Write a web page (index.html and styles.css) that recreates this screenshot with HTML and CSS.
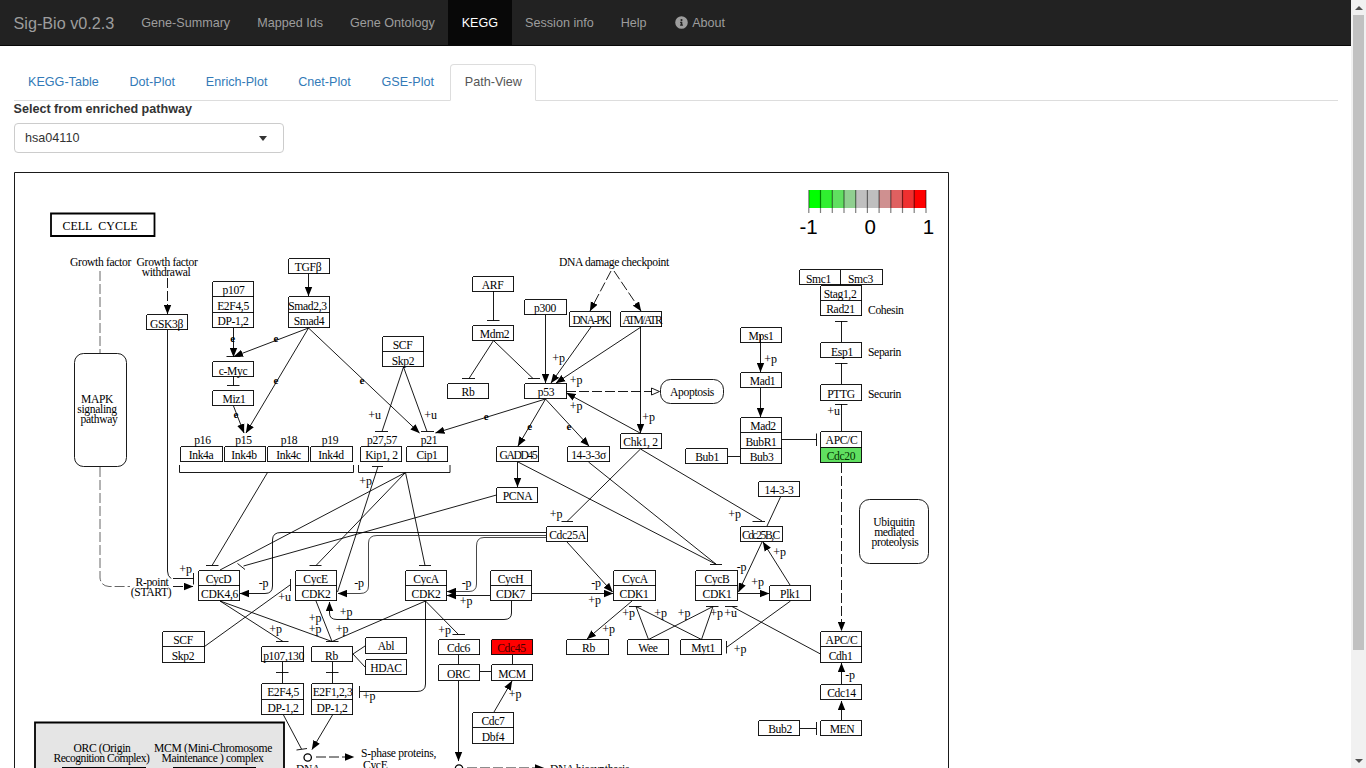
FILE: index.html
```html
<!DOCTYPE html>
<html lang="en">
<head>
<meta charset="utf-8">
<title>Sig-Bio v0.2.3</title>
<link rel="stylesheet" href="styles.css">
</head>
<body>
<div class="shell">
<div class="page">
<nav class="navbar">
  <a class="brand">Sig-Bio v0.2.3</a>
  <a class="nav-item">Gene-Summary</a>
  <a class="nav-item">Mapped Ids</a>
  <a class="nav-item">Gene Ontology</a>
  <a class="nav-item active">KEGG</a>
  <a class="nav-item">Session info</a>
  <a class="nav-item">Help</a>
  <a class="nav-item about"><svg class="info" viewBox="0 0 512 512"><path d="M256 8a248 248 0 1 0 0 496 248 248 0 0 0 0-496zm0 110a42 42 0 1 1 0 84 42 42 0 0 1 0-84zm56 254c0 7-5 12-12 12h-88c-7 0-12-5-12-12v-24c0-7 5-12 12-12h12v-64h-12c-7 0-12-5-12-12v-24c0-7 5-12 12-12h64c7 0 12 5 12 12v100h12c7 0 12 5 12 12z"/></svg>About</a>
</nav>
<main class="content">
  <div class="tabs">
    <a class="tab">KEGG-Table</a><a class="tab">Dot-Plot</a><a class="tab">Enrich-Plot</a><a class="tab">Cnet-Plot</a><a class="tab">GSE-Plot</a><a class="tab active">Path-View</a>
  </div>
  <label class="field-label">Select from enriched pathway</label>
  <div class="select"><span>hsa04110</span><i class="caret"></i></div>
  <svg class="pathway" viewBox="14 172 935 620" width="935" height="620">
    <defs>
      <marker id="arrow" markerUnits="userSpaceOnUse" markerWidth="10" markerHeight="8" refX="9" refY="4" orient="auto"><path d="M0 .3 9.3 4 0 7.7z"/></marker>
    </defs>
    <path class="line" d="M14.5 172.5H948.5V1200H14.5z"/>

    <!-- colour key -->
    <g class="crisp">
      <path fill="#00ff00" d="M809 190h12v18h-12z"/><path fill="#30ef30" d="M821 190h11v18h-11z"/><path fill="#60df60" d="M832 190h12v18h-12z"/><path fill="#90cf90" d="M844 190h12v18h-12z"/><path fill="#bfbfbf" d="M856 190h23v18h-23z"/><path fill="#cf9090" d="M879 190h12v18h-12z"/><path fill="#df6060" d="M891 190h11v18h-11z"/><path fill="#ef3030" d="M902 190h12v18h-12z"/><path fill="#ff0000" d="M914 190h12v18h-12z"/>
    </g>
    <path class="ticks" d="M808.8 190v23M820.5 190v23M832.3 190v23M844 190v23M855.7 190v23M867.4 190v23M879.1 190v23M890.8 190v23M902.5 190v23M914.2 190v23M926 190v23"/>
    <g class="key"><text x="808.5" y="234">-1</text><text x="870.3" y="234">0</text><text x="928.5" y="234">1</text></g>

    <!-- complexes panel -->
    <path class="panel" d="M35 800V722.5H284V800"/>
    <path class="thick" d="M62 768H146M173 768H256"/>
    <path class="thick" d="M51 213.5H154.500V236H51z"/>

    <!-- coloured genes -->
    <path fill="#60df60" d="M820.5 447.500h41v15h-41z"/>
    <path fill="#ff0000" d="M491.5 639.5h41v15h-41z"/>

    <!-- gene boxes -->
    <path class="line crisp" d="M288.500 258.500h41v15h-41zM212.500 281.500h41v46h-41zM212.500 296.500h41M212.500 312.500h41M288.500 296.500h41v31h-41zM288.500 312.500h41M146.500 314.500h41v15h-41zM212.500 361.500h41v15h-41zM212.500 390.500h41v15h-41z
      M180.500 446.500h42v15h-42zM224.500 446.500h41v15h-41zM267.500 446.500h41v15h-41zM310.500 446.500h42v15h-42zM360.500 446.500h41v15h-41zM406.500 446.500h41v15h-41z
      M382.500 336.500h41v30h-41zM382.500 351.500h41M472.500 276.500h41v15h-41zM472.500 325.500h41v15h-41zM524.500 299.500h42v15h-42zM569.500 311.500h41v15h-41zM620.500 311.500h41v15h-41zM447.500 383.500h41v15h-41zM524.500 383.500h42v15h-42zM496.500 446.500h42v15h-42zM567.500 446.500h42v15h-42zM620.500 433.500h41v15h-41z
      M740.500 327.500h41v15h-41zM740.500 372.500h41v15h-41zM740.500 417.500h41v46h-41zM740.500 432.500h41M740.500 448.500h41M685.500 448.500h42v15h-42z
      M799.500 269.500h83v15h-83zM840.500 269.500v15M820.500 285.500h41v30h-41zM820.500 300.500h41M820.500 342.500h41v15h-41zM820.500 384.500h41v16h-41zM820.500 431.500h41v31h-41zM820.500 447.500h41
      M758.500 481.500h41v15h-41zM740.500 526.500h42v15h-42zM613.500 570.500h42v30h-42zM613.500 585.500h42M695.500 570.500h42v30h-42zM695.500 585.500h42M769.500 585.500h41v15h-41zM627.500 639.500h41v15h-41zM680.500 639.500h41v15h-41zM566.500 639.500h42v15h-42z
      M405.500 570.500h41v30h-41zM405.500 585.500h41M490.500 570.500h41v30h-41zM490.500 585.500h41M496.500 487.500h41v15h-41zM546.500 526.500h41v15h-41zM365.500 637.500h41v16h-41zM365.500 659.500h41v15h-41zM438.500 639.500h41v15h-41zM491.500 639.500h41v15h-41zM438.500 664.500h41v16h-41zM491.500 664.500h41v16h-41zM472.500 712.500h41v31h-41zM472.500 727.500h41
      M198.500 570.500h41v30h-41zM198.500 585.500h41M295.500 570.500h41v30h-41zM295.500 585.500h41M162.500 631.500h42v31h-42zM162.500 646.500h42M261.500 646.500h42v15h-42zM311.500 646.500h41v15h-41zM261.500 683.500h42v31h-42zM261.500 699.500h42M311.500 683.500h41v31h-41zM311.500 699.500h41
      M820.500 631.500h41v31h-41zM820.500 646.500h41M820.500 684.500h41v15h-41zM820.500 720.500h41v15h-41zM758.500 720.500h41v15h-41z"/>
    <g class="line"><rect x="74.500" y="353.500" width="52" height="113" rx="9"/><rect x="660.500" y="379.500" width="63" height="24" rx="10"/><rect x="859.500" y="499.500" width="69" height="64" rx="10"/></g>

    <!-- plain and inhibition edges -->
    <path class="line" d="M179.500 465V472.500H353.500V465M358.500 465V472.500H450V465
      M233.500 376V385.500M227 385.500H239.500M226.500 356.500H240.500
      M403.500 367 382 431.500M375 431.500H388M403.500 367 427 431.500M421 431.500H434
      M493.500 291V320.500M487 320.500H499.500M493.500 340.500 469 378.500M462 378.500H475M493.500 340.500 533 378.500M528 378.500H540
      M640.500 449 567 521.500M561.500 521.500H573M640.500 449 762 521M752.500 521.500H765M588.500 462 716.500 564.500M518 462 716.500 564.500M710 564.500H722
      M496.500 495 243.500 566M237.500 563.500 245 569.500M267.500 472.500 212 565.500M206 565.500H218.500M405.500 472.500 220 570M405.500 472.500 316 565.500M309.500 565.500H321.500M405.500 472.500 425 565.500M419 565.500H431M337.500 592 378 466.500M372 466.500H383
      M167.500 330V571Q167.500 576 171 578.500M173 578.500H193.500M193.500 573V584.500
      M220 601 283 641.500M276 641.500H288.500M220 601 332 641.500M326 641.500H338.500M316 601 332 641.500M425.500 601 332 641.500M425.500 601 458.500 634.500M452.500 634.500H465M425.500 601V684Q425.500 691.500 417 691.500H359.500M359.500 686V698
      M282.500 662V683M276 672.500H288.500M332.500 662V683M326 672.500H338.500M353 654 365 646M353 654 365 667M204.500 646.500 290 585M290.500 579V591M283.500 715 301.500 749M296.500 750 307 748.500
      M458.500 655V664M512.500 655V664M480 671.500H491
      M648.500 639.500 636 606.500M648.500 639.500 713 606.500M701.500 639.500 636 606.500M701.500 639.500 713 606.500M629 606.500H641.500M706 606.500H718.500M725 606.500H737.500M820.500 654 732 606.500M790.500 601 727 647M726.500 641V653.500M780.500 497 767 526
      M728 456.500H740M782 439.500H816.500M816.500 433.500V446M841.500 321V342M835 321.500H847.500M841.500 363V384M835 363.500H847.500M841.500 404V431M835 404.500H847.500M800 728.500H816.500M816.500 722V735"/>

    <!-- dashed edges -->
    <g class="line dash">
      <path class="soft" d="M100 271V353M100 467V578Q101 586 109 586.500H130"/>
      <path d="M566 391.500H652"/>
      <g marker-end="url(#arrow)"><path d="M167.500 278V314"/><path d="M173 586.500H193"/><path d="M611 271 590 311"/><path d="M614 271 641 311"/><path d="M841.500 463V631"/><path d="M316 757H354"/><path d="M467 768H544"/></g>
    </g>
    <path class="line" d="M651.500 388 659.500 391.500 651.500 395z"/>

    <!-- activation edges -->
    <g class="line arrows">
      <path d="M308.500 274V296"/><path d="M233.500 328V357"/><path d="M308.500 328 234 356.500"/><path d="M308.500 328 246 433"/><path d="M308.500 328 419.500 433"/><path d="M233.500 406 244 433"/>
      <path d="M545.500 315V383"/><path d="M591 327 551 383"/><path d="M641 327 556 383"/><path d="M640.500 327V433"/><path d="M640 433 566.500 393"/>
      <path d="M545.500 399 435.500 433"/><path d="M545.500 399 518 446"/><path d="M545.500 399 589 446"/><path d="M517.500 462V487"/>
      <path d="M546 532.500H281Q272.500 532.500 272.500 540V586Q272.500 593.500 265 593.500H240"/><path class="mid" d="M546 535.500H377Q368.500 535.500 368.500 543V586Q368.500 593.500 360 593.500H338"/><path class="mid" d="M546 537.500H484Q476.500 537.500 476.500 546V584Q476.500 591.500 469 591.500H447"/>
      <path d="M490 595.500H447"/><path d="M532 593.500H613"/><path d="M511.500 601V613Q511.500 619.500 504 619.500H337Q329.500 619.500 329.500 613V602"/><path d="M567 542 612.500 592"/>
      <path d="M332.500 715 312 749.500"/><path d="M458.500 681V761"/><path d="M494 712 512 681"/><path d="M632 601 587 639"/><path d="M790 585 763 542"/><path d="M762 542 738.500 592"/><path d="M738 593.500H769"/>
      <path d="M760.500 335V372"/><path d="M760.500 388V417"/><path d="M841.500 684V663"/><path d="M841.500 720V701"/>
    </g>
    <g class="ring"><circle cx="307.700" cy="757.500" r="3.700"/><circle cx="459" cy="768.500" r="3.700"/></g>

    <!-- labels -->
    <g class="label">
      <text x="62.500" y="230" class="left title" textLength="75" lengthAdjust="spacingAndGlyphs">CELL&#160; CYCLE</text>
      <text x="100.500" y="266">Growth factor</text><text x="167" y="266">Growth factor</text><text x="166" y="276">withdrawal</text>
      <text x="308" y="271">TGFβ</text><text x="233.500" y="294">p107</text><text x="233" y="310">E2F4,5</text><text x="233" y="325">DP-1,2</text><text x="307.500" y="310">Smad2,3</text><text x="309" y="325">Smad4</text><text x="166.500" y="328">GSK3β</text><text x="233" y="375">c-Myc</text><text x="234" y="403">Miz1</text>
      <text x="97" y="403">MAPK</text><text x="97" y="413">signaling</text><text x="99" y="423">pathway</text>
      <text x="202.500" y="444">p16</text><text x="243.500" y="444">p15</text><text x="289" y="444">p18</text><text x="330" y="444">p19</text><text x="382" y="444">p27,57</text><text x="429" y="444">p21</text>
      <text x="201" y="459">Ink4a</text><text x="244" y="459">Ink4b</text><text x="288.500" y="459">Ink4c</text><text x="331" y="459">Ink4d</text><text x="381.500" y="459">Kip1, 2</text><text x="427" y="459">Cip1</text>
      <text x="402.500" y="349">SCF</text><text x="403" y="365">Skp2</text><text x="492.500" y="289">ARF</text><text x="494.500" y="338">Mdm2</text><text x="545" y="312">p300</text><text x="591" y="324" textLength="37">DNA-PK</text><text x="642.500" y="324" textLength="40">ATM/ATR</text><text x="468" y="396">Rb</text><text x="546" y="396">p53</text><text x="614" y="266">DNA damage checkpoint</text>
      <text x="518.500" y="459" textLength="38">GADD45</text><text x="588.500" y="459">14-3-3σ</text><text x="640.500" y="446">Chk1, 2</text><text x="692" y="396">Apoptosis</text><text x="761" y="340">Mps1</text><text x="762.500" y="385">Mad1</text><text x="763" y="430">Mad2</text><text x="761" y="446">BubR1</text><text x="761.500" y="461">Bub3</text><text x="707" y="461">Bub1</text>
      <text x="818.500" y="283">Smc1</text><text x="860.500" y="283">Smc3</text><text x="840" y="298">Stag1,2</text><text x="840.500" y="313">Rad21</text><text x="842" y="356">Esp1</text><text x="841" y="398">PTTG</text><text x="841.500" y="444">APC/C</text><text x="841" y="460" fill="#030">Cdc20</text>
      <text x="868" y="314" class="left">Cohesin</text><text x="868" y="356" class="left">Separin</text><text x="868" y="398" class="left">Securin</text>
      <text x="779" y="494">14-3-3</text><text x="761" y="539" textLength="38">Cdc25B,C</text><text x="894" y="526">Ubiquitin</text><text x="894" y="536">mediated</text><text x="895" y="546">proteolysis</text>
      <text x="218.500" y="583">CycD</text><text x="219.500" y="598">CDK4,6</text><text x="315.500" y="583">CycE</text><text x="316" y="598">CDK2</text><text x="426" y="583">CycA</text><text x="426" y="598">CDK2</text><text x="510.500" y="583">CycH</text><text x="510.500" y="598">CDK7</text><text x="517.500" y="500">PCNA</text><text x="567.500" y="539">Cdc25A</text><text x="635" y="583">CycA</text><text x="634" y="598">CDK1</text><text x="717" y="583">CycB</text><text x="717" y="598">CDK1</text><text x="790" y="598">Plk1</text>
      <text x="152" y="586">R-point</text><text x="151" y="596">(START)</text><text x="183" y="644">SCF</text><text x="183" y="660">Skp2</text><text x="283.500" y="660">p107,130</text><text x="331.500" y="660">Rb</text><text x="283" y="696">E2F4,5</text><text x="283" y="712">DP-1,2</text><text x="332.500" y="696">E2F1,2,3</text><text x="332" y="712">DP-1,2</text><text x="386" y="650">Abl</text><text x="386" y="672">HDAC</text>
      <text x="458.500" y="652">Cdc6</text><text x="511.500" y="652" fill="#400">Cdc45</text><text x="458.500" y="678">ORC</text><text x="512" y="678">MCM</text><text x="493" y="725">Cdc7</text><text x="493" y="741">Dbf4</text><text x="588.500" y="652">Rb</text><text x="648" y="652">Wee</text><text x="703" y="652">Myt1</text><text x="841.500" y="644">APC/C</text><text x="840.500" y="660">Cdh1</text><text x="841.500" y="697">Cdc14</text><text x="842" y="733">MEN</text><text x="780" y="733">Bub2</text>
      <text x="102" y="752">ORC (Origin</text><text x="101.500" y="762" textLength="96">Recognition Complex)</text><text x="213" y="752" textLength="118">MCM (Mini-Chromosome</text><text x="212.500" y="762">Maintenance ) complex</text>
      <text x="361" y="757" class="left" textLength="75">S-phase proteins,</text><text x="363" y="769" class="left">CycE</text><text x="296" y="773" class="left">DNA</text><text x="550" y="773" class="left">DNA biosynthesis</text>
    </g>
    <g class="label mod">
      <text x="558.500" y="362">+p</text><text x="576" y="384">+p</text><text x="576" y="410">+p</text><text x="374.500" y="419">+u</text><text x="430.500" y="419">+u</text><text x="648.500" y="421">+p</text><text x="770.500" y="363">+p</text><text x="833.500" y="415">+u</text><text x="185.500" y="573">+p</text><text x="263.500" y="587">-p</text><text x="284.500" y="601">+u</text><text x="275.500" y="633">+p</text><text x="315" y="622">+p</text><text x="315" y="633">+p</text><text x="365.500" y="485">+p</text><text x="556" y="518">+p</text><text x="359" y="587">-p</text><text x="466.500" y="587">-p</text><text x="466" y="605">+p</text><text x="596" y="587">-p</text><text x="594.500" y="604">+p</text><text x="346" y="616">+p</text><text x="342" y="633">+p</text><text x="444.500" y="634">+p</text><text x="369" y="700">+p</text><text x="515" y="698">+p</text><text x="608.500" y="633">+p</text><text x="734.500" y="518">+p</text><text x="741.500" y="571">-p</text><text x="779.500" y="556">+p</text><text x="757.500" y="586">+p</text><text x="628.500" y="617">+p</text><text x="660.500" y="617">+p</text><text x="684" y="617">+p</text><text x="716.500" y="617">+p</text><text x="730.500" y="617">+u</text><text x="740" y="653">+p</text><text x="850" y="679">-p</text>
    </g>
    <g class="label expr">
      <text x="232.500" y="342">e</text><text x="275.700" y="342">e</text><text x="275.700" y="384">e</text><text x="235.700" y="418">e</text><text x="361.700" y="384">e</text><text x="486" y="420">e</text><text x="529.500" y="430">e</text><text x="568.700" y="430">e</text>
    </g>
  </svg>
</main>
</div>
<div class="scrollbar"><i class="up"></i><div class="thumb"></div><i class="down"></i></div>
</div>
</body>
</html>
```

FILE: styles.css
```css
* { box-sizing: border-box; }
body { margin: 0; overflow: hidden; background: #fff; color: #333; font: 12.6px/18px "Liberation Sans", Arial, sans-serif; }
.shell { display: flex; height: 768px; overflow: hidden; }
.page { flex: 1; min-width: 0; overflow: hidden; }

.navbar { display: flex; height: 46px; background: #222; border-bottom: 1px solid #080808; color: #9d9d9d; }
.brand { padding: 13.5px; font-size: 16.2px; white-space: nowrap; }
.nav-item { padding: 13.5px; white-space: nowrap; }
.nav-item.active { background: #080808; color: #fff; }
.about { display: flex; padding-left: 14.5px; }
.info { width: 13px; height: 13px; margin: 2px 4.5px 0 0; fill: #9d9d9d; }

.content { padding: 18px 13.5px 0; }
.tabs { display: flex; height: 37px; border-bottom: 1px solid #ddd; }
.tab { height: 37px; margin-right: 1.8px; padding: 8px 13.5px; border: 1px solid transparent; border-radius: 4px 4px 0 0; color: #337ab7; white-space: nowrap; }
.tab.active { background: #fff; border-color: #ddd #ddd #fff; color: #555; }
.field-label { display: block; height: 22px; line-height: 16px; font-weight: bold; }
.select { display: flex; align-items: center; justify-content: space-between; width: 270.5px; height: 30px; margin-bottom: 19px; padding: 0 16px 0 10.5px; border: 1px solid #ccc; border-radius: 4px; }
.caret { border: 4.5px solid transparent; border-top: 5px solid #333; border-bottom: 0; }

.pathway { display: block; margin-left: .5px; }
.line { fill: none; stroke: #000; stroke-width: .9; }
.crisp { shape-rendering: crispEdges; }
.soft { stroke: #555; }
.mid { stroke: #333; }
.dash { stroke-dasharray: 10 3; }
.arrows path { marker-end: url(#arrow); }
.thick { fill: none; stroke: #000; stroke-width: 1.8; }
.panel { fill: #e5e5e5; stroke: #000; stroke-width: 1.8; }
.ring { fill: #fff; stroke: #000; stroke-width: 1.3; }
.ticks { stroke: #000; stroke-opacity: .5; stroke-width: 1.2; }
.key { font: 20.5px "Liberation Sans", Arial, sans-serif; text-anchor: middle; fill: #000; }
.label { font: 11.6px "Liberation Serif", "Times New Roman", serif; letter-spacing: -.35px; text-anchor: middle; fill: #000; }
.label .left { text-anchor: start; }
.label .title { font-size: 13.5px; letter-spacing: 0; }
.mod { font-size: 12px; letter-spacing: -.2px; }
.expr { font-weight: bold; font-size: 11px; }

.scrollbar { display: flex; flex-direction: column; align-items: center; width: 15px; background: #f1f1f1; }
.thumb { width: 11px; height: 635px; margin: 5px 0 auto; background: #c1c1c1; }
.up, .down { border: 4px solid transparent; }
.up { margin-top: 6px; border-top: 0; border-bottom-color: #505050; }
.down { margin-bottom: 5px; border-bottom: 0; border-top-color: #505050; }
```
